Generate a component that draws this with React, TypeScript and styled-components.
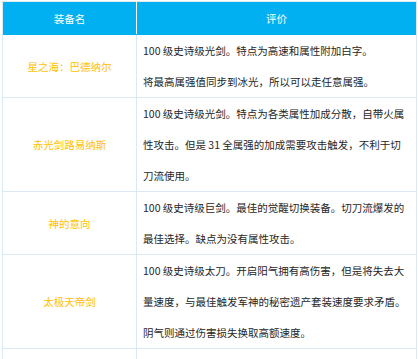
import React from "react";
import styled, { createGlobalStyle } from "styled-components";

const Global = createGlobalStyle`
  html, body { margin: 0; padding: 0; background: #fff; overflow: hidden; }
  body { font-family: "Noto Sans CJK SC", "Noto Sans", sans-serif; }
`;

const Table = styled.div`
  margin: 1px 0 0 2px;
  width: 415px;
  box-sizing: border-box;
  border-top: 1px solid #e6ecf1;
  border-left: 1px solid #dbe8f6;
  border-right: 1px solid #dbe8f6;
  font-size: 10.5px;
`;

const Row = styled.div<{ $head?: boolean }>`
  display: grid;
  grid-template-columns: 134px 1fr;
  background: ${(p) => (p.$head ? "#00b0f0" : "#fff")};
  border-bottom: 1px solid ${(p) => (p.$head ? "#00b0f0" : "#dbe8f6")};
`;

const HeadCell = styled.div<{ $first?: boolean }>`
  height: 32px;
  display: flex;
  align-items: center;
  justify-content: center;
  color: #fff;
  border-right: ${(p) => (p.$first ? "1px solid #ffffff" : "none")};
`;

const NameCell = styled.div`
  display: flex;
  align-items: center;
  justify-content: center;
  color: #ffc000;
  border-right: 1px solid #dbe8f6;
  line-height: 31px;
`;

const DescCell = styled.div`
  padding-left: 6px;
  color: #262626;
  line-height: 31px;
  white-space: nowrap;
`;

const Line = styled.div``;

const rows: { name: string; lines: string[] }[] = [
  {
    name: "星之海：巴德纳尔",
    lines: [
      "100 级史诗级光剑。特点为高速和属性附加白字。",
      "将最高属强值同步到冰光，所以可以走任意属强。",
    ],
  },
  {
    name: "赤光剑路易纳斯",
    lines: [
      "100 级史诗级光剑。特点为各类属性加成分散，自带火属",
      "性攻击。但是 31 全属强的加成需要攻击触发，不利于切",
      "刀流使用。",
    ],
  },
  {
    name: "神的意向",
    lines: [
      "100 级史诗级巨剑。最佳的觉醒切换装备。切刀流爆发的",
      "最佳选择。缺点为没有属性攻击。",
    ],
  },
  {
    name: "太极天帝剑",
    lines: [
      "100 级史诗级太刀。开启阳气拥有高伤害，但是将失去大",
      "量速度，与最佳触发军神的秘密遗产套装速度要求矛盾。",
      "阴气则通过伤害损失换取高额速度。",
    ],
  },
  {
    name: "",
    lines: ["\u00a0", "\u00a0"],
  },
];

export default function App() {
  return (
    <>
      <Global />
      <Table>
        <Row $head>
          <HeadCell $first>装备名</HeadCell>
          <HeadCell>评价</HeadCell>
        </Row>
        {rows.map((r, i) => (
          <Row key={i}>
            <NameCell>{r.name}</NameCell>
            <DescCell>
              {r.lines.map((l, j) => (
                <Line key={j}>{l}</Line>
              ))}
            </DescCell>
          </Row>
        ))}
      </Table>
    </>
  );
}
